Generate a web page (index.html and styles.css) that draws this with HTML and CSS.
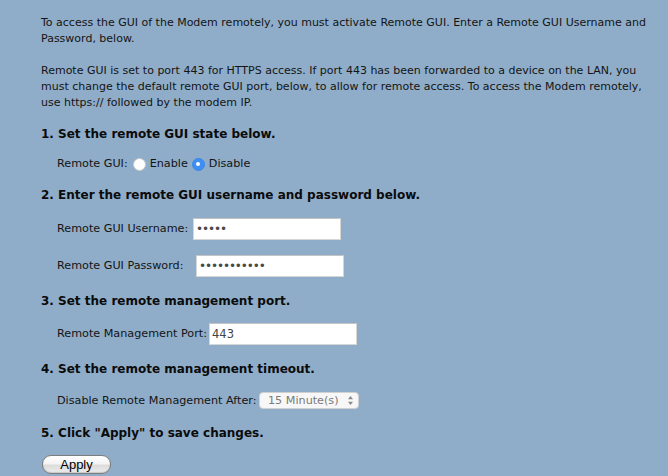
FILE: index.html
```html
<!DOCTYPE html>
<html lang="en">
<head>
<meta charset="utf-8">
<title>Remote GUI</title>
<link rel="stylesheet" href="styles.css">
</head>
<body>
<main class="page">
  <p class="intro">To access the GUI of the Modem remotely, you must activate Remote GUI. Enter a Remote GUI Username and<br>Password, below.</p>
  <p class="intro intro-second">Remote GUI is set to port 443 for HTTPS access. If port 443 has been forwarded to a device on the LAN, you<br>must change the default remote GUI port, below, to allow for remote access. To access the Modem remotely,<br>use https:// followed by the modem IP.</p>

  <h2 class="step step-first">1. Set the remote GUI state below.</h2>
  <div class="row row-radio">
    <span class="label-inline">Remote GUI:</span>
    <label class="radio"><input type="radio" name="rgui" class="radio-input"> Enable</label>
    <label class="radio"><input type="radio" name="rgui" class="radio-input" checked> Disable</label>
  </div>

  <h2 class="step step-tight">2. Enter the remote GUI username and password below.</h2>
  <div class="row row-user">
    <label class="label label-user" for="user">Remote GUI Username:</label>
    <input id="user" class="field field-pass" type="password" value="admin">
  </div>
  <div class="row">
    <label class="label label-pass" for="pass">Remote GUI Password:</label>
    <input id="pass" class="field field-pass" type="password" value="12345678901">
  </div>

  <h2 class="step">3. Set the remote management port.</h2>
  <div class="row">
    <label class="label label-port" for="port">Remote Management Port:</label>
    <input id="port" class="field" type="text" value="443">
  </div>

  <h2 class="step">4. Set the remote management timeout.</h2>
  <div class="row row-select">
    <label class="label label-timeout" for="timeout">Disable Remote Management After:</label>
    <div class="select">
      <select id="timeout" class="select-input">
        <option>15 Minute(s)</option>
      </select>
      <svg class="select-arrows" width="7" height="11" viewBox="0 0 7 11"><path d="M3.5 1 L6 4.2 H1 Z M3.5 10 L6 6.8 H1 Z" fill="#8a8a8a"/></svg>
    </div>
  </div>

  <h2 class="step">5. Click "Apply" to save changes.</h2>
  <div class="actions">
    <button class="btn" type="button">Apply</button>
  </div>
</main>
</body>
</html>
```

FILE: styles.css
```css
html, body {
  margin: 0;
  padding: 0;
  background: #8fadc9;
}

body {
  font-family: "DejaVu Sans", Verdana, sans-serif;
  font-size: 11px;
  line-height: 16px;
  color: #141414;
  width: 668px;
  height: 476px;
  overflow: hidden;
}

.page {
  display: flex;
  flex-direction: column;
  align-items: flex-start;
  padding: 15px 0 0 41px;
}

.intro {
  margin: 0;
  font-size: 11px;
  white-space: nowrap;
}

.intro-second {
  margin-top: 16px;
}

.step {
  margin: 15px 0 0;
  font-size: 12px;
  line-height: 16px;
  font-weight: bold;
  color: #0b0b0b;
  white-space: nowrap;
  position: relative;
  top: 1px;
}

.step-first {
  margin-top: 14px;
}

.step-tight {
  margin-top: 14px;
}

.row {
  display: flex;
  align-items: center;
  height: 22px;
  margin: 15px 0 0 16px;
  font-size: 11.2px;
  white-space: nowrap;
}

.row-radio {
  height: 16px;
  margin-top: 15px;
}

.row-user {
  margin-top: 16px;
}

.row-select {
  height: 17px;
  margin-top: 16px;
}

.label-inline {
  margin-right: 5px;
}

.radio {
  display: flex;
  align-items: center;
  margin-right: 4px;
}

.radio-input {
  -webkit-appearance: none;
  appearance: none;
  width: 13px;
  height: 13px;
  margin: 0 4px 0 0;
  border-radius: 50%;
  background: #ffffff;
  border: 1px solid #c9c9c9;
  box-sizing: border-box;
  position: relative;
}

.radio-input:checked {
  background: #3d8ff5;
  border-color: #3786ec;
}

.radio-input:checked::after {
  content: "";
  position: absolute;
  left: 50%;
  top: 50%;
  width: 4px;
  height: 4px;
  margin: -2px 0 0 -2px;
  border-radius: 50%;
  background: #ffffff;
}

.label {
  display: inline-block;
}

.label-user { width: 136px; }
.label-pass { width: 139px; }
.label-port { width: 152px; }
.label-timeout { width: 202px; }

.field {
  box-sizing: border-box;
  width: 148px;
  height: 22px;
  margin: 0;
  padding: 0 2px;
  border: 1px solid #d6d6d6;
  border-top-color: #c4c4c4;
  background: #ffffff;
  font-family: "DejaVu Sans", Verdana, sans-serif;
  font-size: 11.5px;
  color: #444444;
  outline: none;
}

.field-pass {
  font-size: 12px;
  letter-spacing: -1.1px;
  color: #4a4a4a;
}

.select {
  position: relative;
  width: 100px;
  height: 17px;
}

.select-input {
  -webkit-appearance: none;
  appearance: none;
  box-sizing: border-box;
  width: 100%;
  height: 17px;
  margin: 0;
  padding: 0 0 0 8px;
  border: 1px solid #d0d0d0;
  border-radius: 4px;
  background: #f7f7f7;
  font-family: "DejaVu Sans", Verdana, sans-serif;
  font-size: 11.2px;
  line-height: 15px;
  color: #7a7a7a;
}

.select-arrows {
  position: absolute;
  right: 5px;
  top: 3px;
  pointer-events: none;
}

.actions {
  margin-top: 15px;
}

.btn {
  box-sizing: border-box;
  width: 69px;
  height: 19px;
  margin: 0 0 0 1px;
  padding: 0;
  border: 1px solid #7d7d7d;
  border-radius: 9px;
  background: linear-gradient(#ffffff 0%, #f4f4f4 45%, #dcdcdc 55%, #ececec 100%);
  box-shadow: inset 0 -1px 1px rgba(0,0,0,0.15);
  font-family: "Liberation Sans", Arial, sans-serif;
  font-size: 13px;
  line-height: 17px;
  color: #000000;
}
```
